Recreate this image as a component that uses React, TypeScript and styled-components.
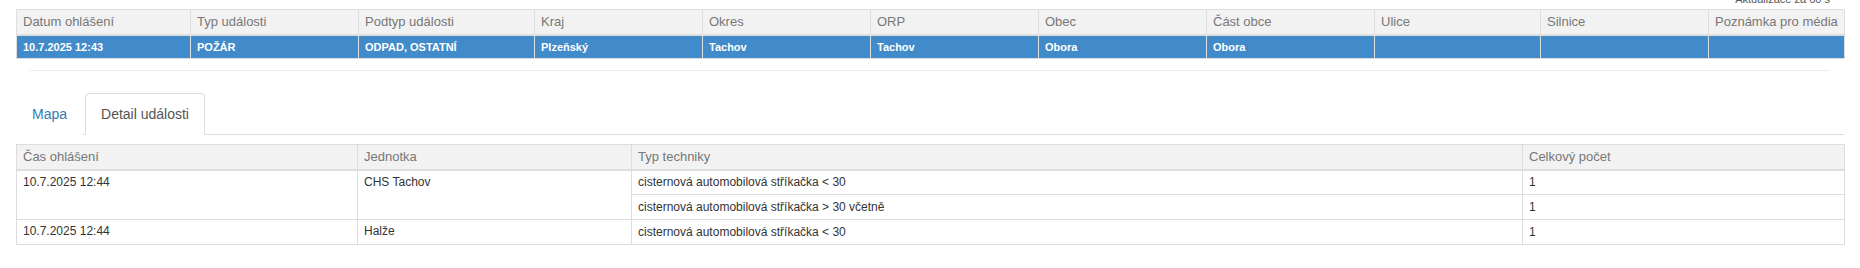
import React from 'react';
import styled, { createGlobalStyle } from 'styled-components';

const Global = createGlobalStyle`
  html, body { margin: 0; padding: 0; background: #fff; }
  body { font-family: "Liberation Sans", Arial, sans-serif; color: #333; }
  * { box-sizing: border-box; }
`;

const Page = styled.div`
  width: 1860px;
  height: 268px;
  overflow: hidden;
  padding: 0 16px;
`;

const StatusBar = styled.div`
  height: 9px;
  overflow: hidden;
  display: flex;
  justify-content: flex-end;
  align-items: flex-end;
  padding-right: 14px;
`;

const StatusText = styled.span`
  font-size: 11px;
  line-height: 11px;
  color: #555;
  margin-bottom: 4px;
`;

const Table = styled.table`
  width: 100%;
  border-collapse: collapse;
  table-layout: fixed;
`;

const HeadCell = styled.th`
  background: #f2f2f2;
  color: #777;
  font-weight: normal;
  font-size: 13px;
  text-align: left;
  white-space: nowrap;
  padding: 0 6px;
  height: 25px;
  border: 1px solid #ddd;
  border-bottom: 2px solid #ddd;
`;

const SelectedCell = styled.td`
  background: #428bca;
  color: #fff;
  font-weight: bold;
  font-size: 11px;
  padding: 0 6px;
  height: 24px;
  border: 1px solid #ddd;
`;

const Cell = styled.td<{ $top?: boolean }>`
  color: #333;
  font-size: 12px;
  padding: 0 6px;
  height: 25px;
  vertical-align: ${p => (p.$top ? 'top' : 'middle')};
  line-height: ${p => (p.$top ? '23px' : 'normal')};
  border: 1px solid #ddd;
`;

const Divider = styled.hr`
  margin: 11px 14px 0;
  border: 0;
  border-top: 1px solid #eee;
`;

const Tabs = styled.ul`
  list-style: none;
  display: flex;
  margin: 22px 0 0;
  padding: 0;
  border-bottom: 1px solid #ddd;
`;

const Tab = styled.li<{ $active?: boolean }>`
  margin: 0 2px -1px 0;
  padding: 10px 15px;
  font-size: 14px;
  line-height: 20px;
  border: 1px solid ${p => (p.$active ? '#ddd' : 'transparent')};
  border-bottom-color: ${p => (p.$active ? '#fff' : 'transparent')};
  border-radius: 4px 4px 0 0;
  background: #fff;
  color: ${p => (p.$active ? '#555' : '#337ab7')};
  cursor: pointer;
`;

const DetailTable = styled(Table)`
  margin-top: 9px;
`;

const eventCols = [174, 168, 176, 168, 168, 168, 168, 168, 166, 168, 136];
const eventHeads = [
  'Datum ohlášení', 'Typ události', 'Podtyp události', 'Kraj', 'Okres', 'ORP',
  'Obec', 'Část obce', 'Ulice', 'Silnice', 'Poznámka pro média',
];
const eventRow = [
  '10.7.2025 12:43', 'POŽÁR', 'ODPAD, OSTATNÍ', 'Plzeňský', 'Tachov', 'Tachov',
  'Obora', 'Obora', '', '', '',
];

const detailCols = [341, 274, 891, 322];
const detailHeads = ['Čas ohlášení', 'Jednotka', 'Typ techniky', 'Celkový počet'];

type Unit = { time: string; unit: string; items: { type: string; count: string }[] };
const units: Unit[] = [
  {
    time: '10.7.2025 12:44',
    unit: 'CHS Tachov',
    items: [
      { type: 'cisternová automobilová stříkačka < 30', count: '1' },
      { type: 'cisternová automobilová stříkačka > 30 včetně', count: '1' },
    ],
  },
  {
    time: '10.7.2025 12:44',
    unit: 'Halže',
    items: [{ type: 'cisternová automobilová stříkačka < 30', count: '1' }],
  },
];

export default function App() {
  return (
    <Page>
      <Global />
      <StatusBar>
        <StatusText>Aktualizace za 60 s</StatusText>
      </StatusBar>
      <Table>
        <colgroup>
          {eventCols.map((w, i) => (
            <col key={i} style={{ width: w }} />
          ))}
        </colgroup>
        <thead>
          <tr>
            {eventHeads.map(h => (
              <HeadCell key={h}>{h}</HeadCell>
            ))}
          </tr>
        </thead>
        <tbody>
          <tr>
            {eventRow.map((v, i) => (
              <SelectedCell key={i}>{v}</SelectedCell>
            ))}
          </tr>
        </tbody>
      </Table>
      <Divider />
      <Tabs>
        <Tab>Mapa</Tab>
        <Tab $active>Detail události</Tab>
      </Tabs>
      <DetailTable>
        <colgroup>
          {detailCols.map((w, i) => (
            <col key={i} style={{ width: w }} />
          ))}
        </colgroup>
        <thead>
          <tr>
            {detailHeads.map(h => (
              <HeadCell key={h}>{h}</HeadCell>
            ))}
          </tr>
        </thead>
        <tbody>
          {units.map((u, ui) =>
            u.items.map((it, ii) => (
              <tr key={`${ui}-${ii}`}>
                {ii === 0 && (
                  <>
                    <Cell $top rowSpan={u.items.length}>{u.time}</Cell>
                    <Cell $top rowSpan={u.items.length}>{u.unit}</Cell>
                  </>
                )}
                <Cell>{it.type}</Cell>
                <Cell>{it.count}</Cell>
              </tr>
            ))
          )}
        </tbody>
      </DetailTable>
    </Page>
  );
}
